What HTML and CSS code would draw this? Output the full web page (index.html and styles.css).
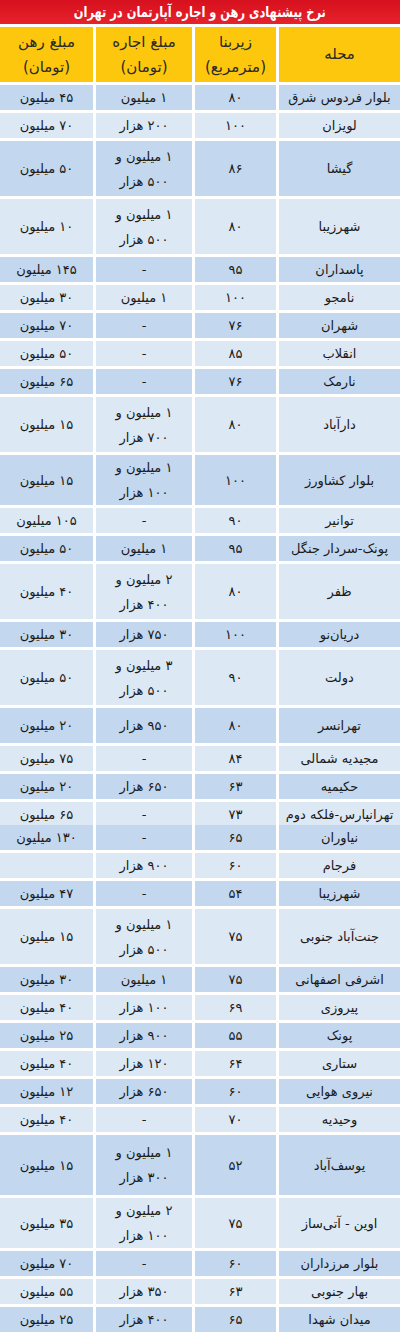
FILE: index.html
```html
<!DOCTYPE html>
<html lang="fa" dir="rtl">
<head>
<meta charset="utf-8">
<title>نرخ پیشنهادی رهن و اجاره آپارتمان در تهران</title>
<link rel="stylesheet" href="styles.css">
</head>
<body>
<div class="sheet">
  <div class="title"><span class="title-text">نرخ پیشنهادی رهن و اجاره آپارتمان در تهران</span></div>
  <div class="row head">
    <div class="cell">محله</div>
    <div class="cell"><span>زیربنا</span><span>(مترمربع)</span></div>
    <div class="cell"><span>مبلغ اجاره</span><span>(تومان)</span></div>
    <div class="cell"><span>مبلغ رهن</span><span>(تومان)</span></div>
  </div>

  <div class="row dark"><div class="cell">بلوار فردوس شرق</div><div class="cell">۸۰</div><div class="cell">۱ میلیون</div><div class="cell">۴۵ میلیون</div></div>
  <div class="row light"><div class="cell">لویزان</div><div class="cell">۱۰۰</div><div class="cell">۲۰۰ هزار</div><div class="cell">۷۰ میلیون</div></div>
  <div class="row dark double"><div class="cell">گیشا</div><div class="cell">۸۶</div><div class="cell"><span>۱ میلیون و</span><span>۵۰۰ هزار</span></div><div class="cell">۵۰ میلیون</div></div>
  <div class="row light double"><div class="cell">شهرزیبا</div><div class="cell">۸۰</div><div class="cell"><span>۱ میلیون و</span><span>۵۰۰ هزار</span></div><div class="cell">۱۰ میلیون</div></div>
  <div class="row dark"><div class="cell">پاسداران</div><div class="cell">۹۵</div><div class="cell">-</div><div class="cell">۱۴۵ میلیون</div></div>
  <div class="row light"><div class="cell">نامجو</div><div class="cell">۱۰۰</div><div class="cell">۱ میلیون</div><div class="cell">۳۰ میلیون</div></div>
  <div class="row dark"><div class="cell">شهران</div><div class="cell">۷۶</div><div class="cell">-</div><div class="cell">۷۰ میلیون</div></div>
  <div class="row light"><div class="cell">انقلاب</div><div class="cell">۸۵</div><div class="cell">-</div><div class="cell">۵۰ میلیون</div></div>
  <div class="row dark"><div class="cell">نارمک</div><div class="cell">۷۶</div><div class="cell">-</div><div class="cell">۶۵ میلیون</div></div>
  <div class="row light double"><div class="cell">دارآباد</div><div class="cell">۸۰</div><div class="cell"><span>۱ میلیون و</span><span>۷۰۰ هزار</span></div><div class="cell">۱۵ میلیون</div></div>
  <div class="row dark double compact"><div class="cell">بلوار کشاورز</div><div class="cell">۱۰۰</div><div class="cell"><span>۱ میلیون و</span><span>۱۰۰ هزار</span></div><div class="cell">۱۵ میلیون</div></div>
  <div class="row light"><div class="cell">توانیر</div><div class="cell">۹۰</div><div class="cell">-</div><div class="cell">۱۰۵ میلیون</div></div>
  <div class="row dark"><div class="cell">پونک-سردار جنگل</div><div class="cell">۹۵</div><div class="cell">۱ میلیون</div><div class="cell">۵۰ میلیون</div></div>
  <div class="row light double"><div class="cell">ظفر</div><div class="cell">۸۰</div><div class="cell"><span>۲ میلیون و</span><span>۴۰۰ هزار</span></div><div class="cell">۴۰ میلیون</div></div>
  <div class="row dark"><div class="cell">دریان‌نو</div><div class="cell">۱۰۰</div><div class="cell">۷۵۰ هزار</div><div class="cell">۳۰ میلیون</div></div>
  <div class="row light double"><div class="cell">دولت</div><div class="cell">۹۰</div><div class="cell"><span>۳ میلیون و</span><span>۵۰۰ هزار</span></div><div class="cell">۵۰ میلیون</div></div>
  <div class="row dark roomy"><div class="cell">تهرانسر</div><div class="cell">۸۰</div><div class="cell">۹۵۰ هزار</div><div class="cell">۲۰ میلیون</div></div>
  <div class="row light"><div class="cell">مجیدیه شمالی</div><div class="cell">۸۴</div><div class="cell">-</div><div class="cell">۷۵ میلیون</div></div>
  <div class="row dark"><div class="cell">حکیمیه</div><div class="cell">۶۳</div><div class="cell">۶۵۰ هزار</div><div class="cell">۲۰ میلیون</div></div>
  <div class="row light slim"><div class="cell">تهرانپارس-فلکه دوم</div><div class="cell">۷۳</div><div class="cell">-</div><div class="cell">۶۵ میلیون</div></div>
  <div class="row dark"><div class="cell">نیاوران</div><div class="cell">۶۵</div><div class="cell">-</div><div class="cell">۱۳۰ میلیون</div></div>
  <div class="row light"><div class="cell">فرجام</div><div class="cell">۶۰</div><div class="cell">۹۰۰ هزار</div><div class="cell"></div></div>
  <div class="row dark"><div class="cell">شهرزیبا</div><div class="cell">۵۴</div><div class="cell">-</div><div class="cell">۴۷ میلیون</div></div>
  <div class="row light double"><div class="cell">جنت‌آباد جنوبی</div><div class="cell">۷۵</div><div class="cell"><span>۱ میلیون و</span><span>۵۰۰ هزار</span></div><div class="cell">۱۵ میلیون</div></div>
  <div class="row dark"><div class="cell">اشرفی اصفهانی</div><div class="cell">۷۵</div><div class="cell">۱ میلیون</div><div class="cell">۳۰ میلیون</div></div>
  <div class="row light"><div class="cell">پیروزی</div><div class="cell">۶۹</div><div class="cell">۱۰۰ هزار</div><div class="cell">۴۰ میلیون</div></div>
  <div class="row dark"><div class="cell">پونک</div><div class="cell">۵۵</div><div class="cell">۹۰۰ هزار</div><div class="cell">۲۵ میلیون</div></div>
  <div class="row light"><div class="cell">ستاری</div><div class="cell">۶۴</div><div class="cell">۱۲۰ هزار</div><div class="cell">۴۰ میلیون</div></div>
  <div class="row dark"><div class="cell">نیروی هوایی</div><div class="cell">۶۰</div><div class="cell">۶۵۰ هزار</div><div class="cell">۱۲ میلیون</div></div>
  <div class="row light"><div class="cell">وحیدیه</div><div class="cell">۷۰</div><div class="cell">-</div><div class="cell">۴۰ میلیون</div></div>
  <div class="row dark double wide"><div class="cell">یوسف‌آباد</div><div class="cell">۵۲</div><div class="cell"><span>۱ میلیون و</span><span>۳۰۰ هزار</span></div><div class="cell">۱۵ میلیون</div></div>
  <div class="row light double compact"><div class="cell">اوین - آتی‌ساز</div><div class="cell">۷۵</div><div class="cell"><span>۲ میلیون و</span><span>۱۰۰ هزار</span></div><div class="cell">۳۵ میلیون</div></div>
  <div class="row dark"><div class="cell">بلوار مرزداران</div><div class="cell">۶۰</div><div class="cell">-</div><div class="cell">۷۰ میلیون</div></div>
  <div class="row light"><div class="cell">بهار جنوبی</div><div class="cell">۶۳</div><div class="cell">۳۵۰ هزار</div><div class="cell">۵۵ میلیون</div></div>
  <div class="row dark"><div class="cell">میدان شهدا</div><div class="cell">۶۵</div><div class="cell">۴۰۰ هزار</div><div class="cell">۲۵ میلیون</div></div>
</div>
</body>
</html>
```

FILE: styles.css
```css
* { box-sizing: border-box; }
html, body { margin: 0; padding: 0; background: #ffffff; }
body {
  font-family: "DejaVu Sans", "Noto Sans", sans-serif;
  color: #1a1a1a;
}
.sheet {
  width: 400px;
  display: flex;
  flex-direction: column;
  gap: 3px;
  background: #ffffff;
}
.title {
  height: 24px;
  background: linear-gradient(#d6101e, #e6232b);
  color: #ffffff;
  display: flex;
  align-items: center;
  justify-content: center;
  overflow: hidden;
}
.title-text {
  display: inline-block;
  font-size: 15px;
  font-weight: bold;
  line-height: 24px;
  white-space: nowrap;
  transform: scaleX(0.76);
}
.row {
  display: grid;
  grid-template-columns: 121px 81px 96px 93px;
  column-gap: 3px;
  height: 25px;
}
.row.slim { height: 20px; }
.row.roomy { height: 35px; }
.row.double { height: 55px; }
.row.double.compact { height: 50px; }
.row.double.wide { height: 60px; }
.row.head { height: 55px; }
.cell {
  display: flex;
  flex-direction: column;
  align-items: center;
  justify-content: center;
  font-size: 13px;
  line-height: 25px;
  white-space: nowrap;
  text-align: center;
}
.head .cell {
  background: #fcc70d;
  color: #2a2a2a;
  font-size: 15px;
}
.dark .cell { background: #c3d7ee; }
.light .cell { background: #dde8f5; }
```
